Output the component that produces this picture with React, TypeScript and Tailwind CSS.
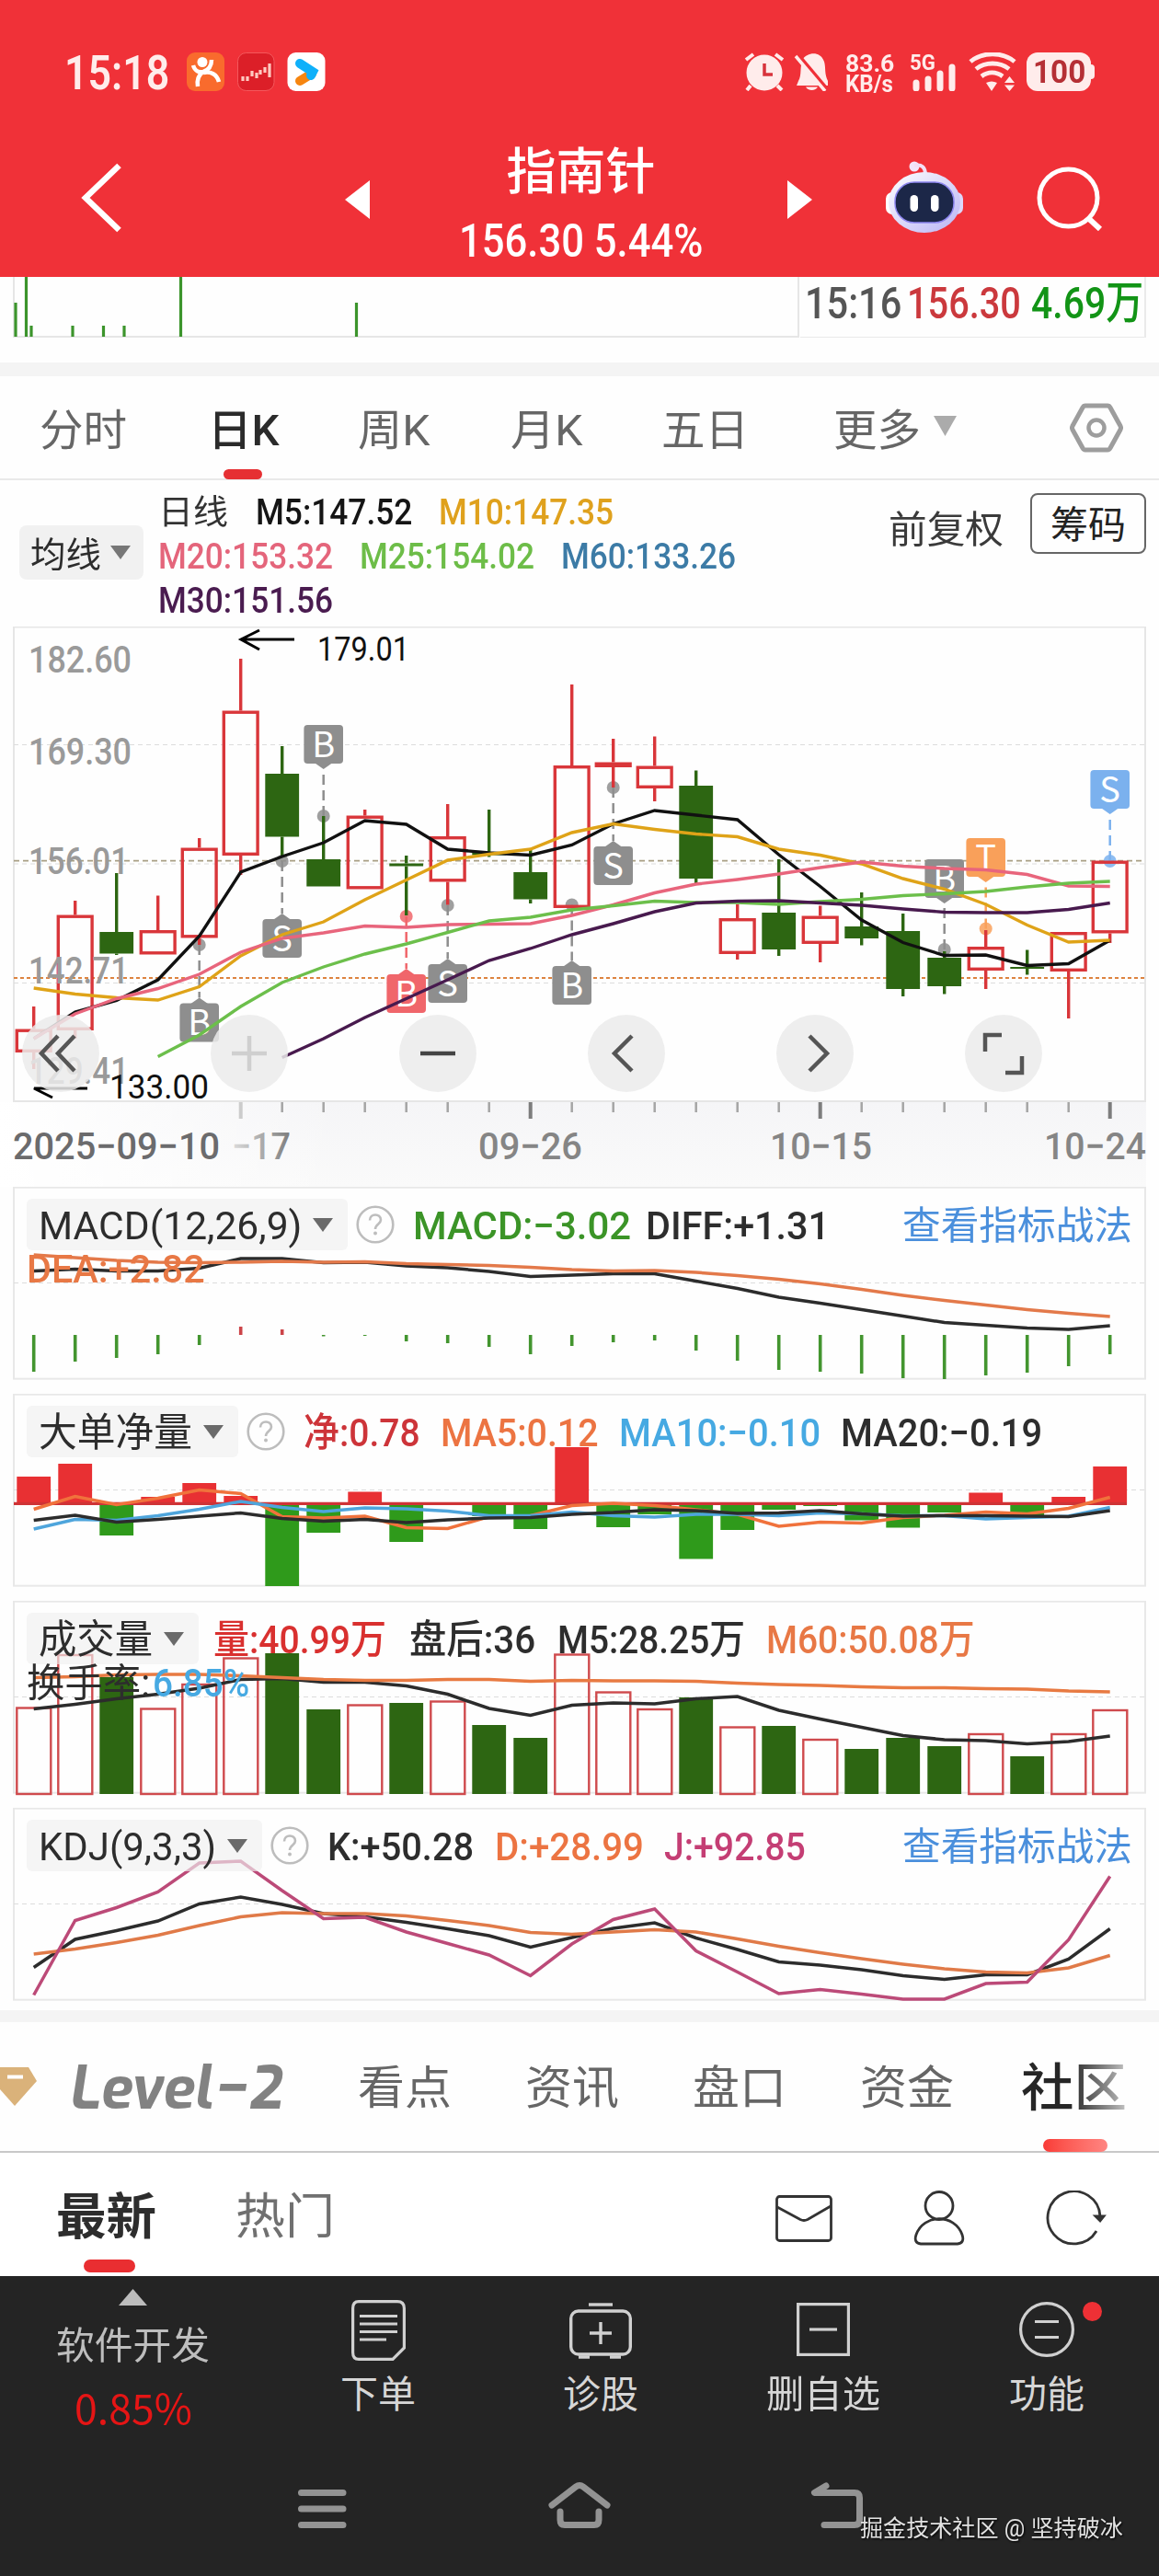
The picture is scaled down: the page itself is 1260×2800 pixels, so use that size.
import { useLayoutEffect, useRef, type ReactNode } from "react";

type FitProps = { w: number; className?: string; children: ReactNode };

// Condenses a label so that it takes exactly w pixels
function Fit({ w, className = "", children }: FitProps) {
  const ref = useRef<HTMLSpanElement>(null);

  useLayoutEffect(() => {
    const el = ref.current;
    if (el) el.style.transform = `scaleX(${w / el.offsetWidth})`;
  }, [w, children]);

  return (
    <span className={`block shrink-0 ${className}`} style={{ width: w }}>
      <span ref={ref} className="inline-block origin-left whitespace-nowrap align-top leading-none">
        {children}
      </span>
    </span>
  );
}

const STEP = 45;
const cx = (i: number) => 36.7 + STEP * i;
const toPoints = (ys: number[], from = 0) =>
  ys.map((y, i) => `${cx(i + from)},${y}`).join(" ");

const RED = "#d9363a";
const GREEN = "#2d6612";

// [up, high, top, bottom, low]
const candles: [boolean, number, number, number, number][] = [
  [true, 413, 437.5, 463, 481],
  [true, 298, 313.5, 439, 448],
  [false, 268, 332, 355.5, 357],
  [true, 292.5, 330, 356.5, 356.5],
  [true, 230, 240.5, 338.5, 346],
  [true, 35, 91.5, 249, 270],
  [false, 130, 160, 228.5, 250.5],
  [false, 206, 253, 282.5, 282.5],
  [true, 199, 205.5, 285.5, 285.5],
  [false, 249, 257.5, 260.5, 314],
  [true, 193, 228, 277.5, 302.5],
  [false, 199, 246, 248.5, 250.5],
  [false, 242.5, 267, 296.5, 301],
  [true, 63, 151, 306, 306],
  [true, 122, 147.5, 153, 175],
  [true, 119.5, 151.5, 176, 190],
  [false, 156.5, 173, 274, 279],
  [true, 302, 317, 356, 362],
  [false, 253, 311, 351, 358],
  [true, 303.5, 314.5, 345, 365],
  [false, 289, 326, 339, 346.5],
  [false, 312, 331, 394, 402],
  [false, 353, 360, 391, 399.5],
  [true, 330, 348, 374, 394],
  [false, 351.5, 370, 372, 378.5],
  [true, 332, 332, 375, 426],
  [true, 254.5, 254.5, 333.5, 344],
];

const maLines = [
  { color: "#111111", from: 0, ys: [448, 419, 406.5, 384, 336.5, 267, 250, 235, 211, 215, 242, 246, 248.5, 237.5, 214.5, 200, 205, 210, 248, 282.5, 319, 343.5, 357.5, 357, 368.5, 366.5, 341] },
  { color: "#dfa318", from: 0, ys: [393, 399.5, 403.5, 406, 391.5, 358, 335, 321, 297, 275.5, 254, 247.5, 242, 224, 214.5, 220.5, 225.5, 228.5, 242, 248.5, 258, 274, 285.5, 302, 324.5, 343, 341] },
  { color: "#e8657c", from: 0, ys: [448, 421, 404.5, 393.5, 378, 354, 339, 333, 325.5, 327, 324, 323.5, 323, 314, 302.5, 289.5, 280, 275, 269, 262, 256, 260.5, 263, 264.5, 269.5, 282, 282.5] },
  { color: "#6cbf4b", from: 3, ys: [467.5, 444, 413, 387, 370, 356, 345, 332.5, 320, 316, 308, 303.5, 298.5, 300, 300, 302, 299, 296.5, 292.5, 290.5, 288, 283, 279, 277] },
  { color: "#481a4e", from: 6, ys: [468.5, 448, 425, 404.5, 384, 363, 350, 335, 323, 310, 300.5, 298.5, 298, 300.5, 303, 307, 310.5, 311, 311, 307.5, 300.5] },
];

const GRAY = "#8e8e8e";
// box top, dot position and colour of every trade flag
const flags = [
  { i: 4, t: "B", top: 409.5, dot: 346, color: GRAY },
  { i: 6, t: "S", top: 318, dot: 255, color: GRAY },
  { i: 7, t: "B", top: 107, dot: 206, color: GRAY },
  { i: 9, t: "B", top: 378, dot: 315, color: "#f0666b" },
  { i: 10, t: "S", top: 367, dot: 303, color: GRAY },
  { i: 13, t: "B", top: 369, dot: 302.5, color: GRAY },
  { i: 14, t: "S", top: 239, dot: 175, color: GRAY },
  { i: 22, t: "B", top: 253, dot: 351, color: GRAY },
  { i: 23, t: "T", top: 230, dot: 328.5, color: "#f9a05a" },
  { i: 26, t: "S", top: 156, dot: 255, color: "#7bb1ee" },
];

function Flag({ i, t, top, dot, color }: (typeof flags)[number]) {
  const x = cx(i);
  const below = top > dot;
  const tip = below ? top - 6 : top + 48;
  const edge = below ? top + 1 : top + 41;
  return (
    <g fill={color}>
      <line x1={x} x2={x} y1={dot} y2={tip} stroke={color} strokeWidth="2.5" strokeDasharray="11 6" />
      <circle cx={x} cy={dot} r="7" opacity="0.85" />
      <path d={`M${x - 10} ${edge} L${x} ${tip} L${x + 10} ${edge}Z`} />
      <rect x={x - 21.3} y={top} width="42.6" height="42" rx="4" />
      <text x={x} y={top + 34.5} fontSize="38" fill="#fff" textAnchor="middle" fontFamily="Noto Sans CJK SC, sans-serif">
        {t}
      </text>
    </g>
  );
}

const priceLabels: [string, number, number][] = [
  ["182.60", 50, 112],
  ["169.30", 149.5, 112],
  ["156.01", 268.5, 109],
  ["142.71", 388, 109],
  ["129.41", 497, 109],
];

function KLineChart() {
  return (
    <svg className="absolute inset-0" width="1260" height="609" viewBox="0 0 1260 609" fontFamily="Roboto, sans-serif">
      <defs>
        <linearGradient id="axis" x1="0" x2="0" y1="0" y2="1">
          <stop offset="0" stopColor="#f5f5f7" />
          <stop offset="1" stopColor="#fafafa" />
        </linearGradient>
        <linearGradient id="fade" x1="0" x2="1">
          <stop offset="0" stopColor="#dcdcdc" />
          <stop offset="1" stopColor="#7d7d7d" />
        </linearGradient>
        <linearGradient id="axisX" x1="0" x2="1">
          <stop offset="0" stopColor="#fff" />
          <stop offset="0.3" stopColor="#fff" stopOpacity="0" />
        </linearGradient>
      </defs>
      <rect x="0" y="517" width="1246" height="92" fill="url(#axis)" />
      <rect x="0" y="517" width="1246" height="92" fill="url(#axisX)" />
      <rect x="15" y="0.5" width="1230" height="515.5" fill="#fefefe" stroke="#e6e6e6" strokeWidth="2" />

      <line x1="15" x2="1245" y1="128.5" y2="128.5" stroke="#dcdcdc" strokeWidth="1" strokeDasharray="5 4" />
      <line x1="15" x2="1245" y1="258" y2="258" stroke="#dcdcdc" strokeWidth="1" strokeDasharray="5 4" />
      <line x1="15" x2="1245" y1="387.5" y2="387.5" stroke="#dcdcdc" strokeWidth="1" strokeDasharray="5 4" />
      <line x1="15" x2="1245" y1="254.7" y2="254.7" stroke="#a89f84" strokeWidth="1.7" strokeDasharray="6 4" />
      <line x1="15" x2="1245" y1="382" y2="382" stroke="#dd8440" strokeWidth="2" strokeDasharray="4 3" />

      {flags.map((f) => (
        <Flag key={f.i} {...f} />
      ))}

      {candles.map(([up, high, top, bottom, low], i) => {
        const x = cx(i);
        const color = up ? RED : GREEN;
        return (
          <g key={i} stroke={color} strokeWidth="3.4">
            <line x1={x} x2={x} y1={high} y2={top} />
            <line x1={x} x2={x} y1={bottom} y2={low} />
            {up ? (
              <rect x={x - 18.4} y={top + 1.7} width="36.8" height={Math.max(bottom - top - 3.4, 1)} fill="none" />
            ) : (
              <rect x={x - 18.4} y={top} width="36.8" height={bottom - top} fill={color} stroke="none" />
            )}
          </g>
        );
      })}

      {priceLabels.map(([label, y, w]) => (
        <text key={label} x="31" y={y} fontSize="41" fill="#9a9a9a" fontWeight="500" textLength={w} lengthAdjust="spacingAndGlyphs">
          {label}
        </text>
      ))}

      {maLines.map((l) => (
        <polyline key={l.color} points={toPoints(l.ys, l.from)} fill="none" stroke={l.color} strokeWidth="3.4" />
      ))}

      {/* High and low of the range */}
      <path d="M320 14H262M282 4L262 14L282 25" fill="none" stroke="#000" strokeWidth="3" />
      <text x="345" y="36.5" fontSize="37" fill="#111" textLength="100" lengthAdjust="spacingAndGlyphs">179.01</text>
      <path d="M95 502H37L57 512" fill="none" stroke="#000" strokeWidth="3" />
      <text x="119" y="513" fontSize="37" fill="#111" textLength="108" lengthAdjust="spacingAndGlyphs">133.00</text>

      {candles.map((_, i) => {
        if (i < 5) return null;
        const long = i % 7 === 5;
        return (
          <line key={i} x1={cx(i)} x2={cx(i)} y1="517" y2={long ? 535 : 528} stroke={i === 5 ? "#ccc" : long ? "#7d7d7d" : "#a5a5a5"} strokeWidth={long ? 4 : 2.5} />
        );
      })}
      <g fontSize="41" fill="#858585" fontWeight="500">
        <text x="14" y="578.500" fill="#6b6b6d" textLength="225" lengthAdjust="spacingAndGlyphs">2025−09−10</text>
        <text x="252" y="578.500" fill="url(#fade)" textLength="64" lengthAdjust="spacingAndGlyphs">−17</text>
        <text x="520" y="578.500" textLength="113" lengthAdjust="spacingAndGlyphs">09−26</text>
        <text x="837" y="578.500" textLength="111" lengthAdjust="spacingAndGlyphs">10−15</text>
        <text x="1135" y="578.500" textLength="111" lengthAdjust="spacingAndGlyphs">10−24</text>
      </g>
    </svg>
  );
}

const controls = [
  { id: "fast", d: "M39 23L21 42L39 61M57 23L39 42L57 61", color: "#555" },
  { id: "plus", d: "M42 23V61M23 42H61", color: "#cfcfcf" },
  { id: "minus", d: "M23 42H61", color: "#444" },
  { id: "prev", d: "M48 23L29 42L48 61", color: "#555" },
  { id: "next", d: "M36 23L55 42L36 61", color: "#555" },
  { id: "full", d: "M22 40V22H40M62 45V63H44", color: "#555" },
];

const macd = {
  diff: [91.5, 89.5, 91.5, 91.5, 88.5, 78, 78, 82.5, 82, 86, 88, 92, 97.5, 96, 94.5, 94.5, 102.5, 110.5, 120, 126.5, 133.5, 140.5, 147.5, 150.5, 153.5, 155, 151],
  dea: [74, 77, 80, 82, 82.5, 82, 81, 82, 81.5, 83.5, 84.5, 85.5, 87.5, 90, 91.5, 91, 93, 96.5, 100.5, 105.5, 111.5, 118, 123.5, 128.5, 133.5, 137.5, 141],
  bars: [40, 29, 25, 21, 11, -9, -6, 1.5, 1, 7, 9, 13, 21, 12, 8, 6, 17, 28, 38, 40, 42, 47, 48, 44, 41, 34, 21],
};

const flow = {
  ends: [90, 76, 154, 112, 97, 111, 209, 151, 106.5, 161, 120, 133, 147, 58, 145, 131, 179.5, 148, 126, 122, 137.5, 145.5, 129, 107.5, 132, 112, 79],
  ma5: [125.5, 111.5, 120.5, 113.5, 104.5, 108.5, 133.5, 135, 133, 145.5, 146.5, 133.5, 132.5, 121.5, 119, 121.5, 126, 131, 144, 139.5, 140.5, 134.5, 132, 128.5, 130.5, 124.5, 112.5],
  ma10: [147, 136.5, 137.5, 132.5, 125.5, 117, 123.5, 128, 124, 125, 127.5, 132.5, 132.5, 128.5, 132.5, 134, 131, 131, 132.5, 129.5, 130.5, 132.5, 132.5, 136, 134.5, 133, 123.5],
  ma20: [137.5, 132, 139.5, 136.5, 133, 129.5, 135.5, 138.5, 136.5, 140, 137, 135, 134.5, 131, 129, 126, 127, 130, 129.5, 127, 130.5, 133, 132.5, 132.5, 133, 133.5, 127],
};

const volume = {
  tops: [115.5, 58, 83, 116.5, 90, 61.5, 57, 118, 112.5, 111, 108.5, 135, 149, 57.5, 98.5, 117, 105, 136.5, 136, 150, 161, 149, 158, 144, 169, 144, 118],
  m5: [117.5, 112.5, 106.5, 101.5, 95, 85.5, 84.5, 88.5, 88.5, 92.5, 101.5, 117, 124.5, 113.5, 111, 112, 106.5, 104, 119, 128.5, 137.5, 146.5, 151, 152, 155.5, 153, 147],
  m60: [83.5, 82.5, 80.5, 80, 80, 81.5, 83.5, 85.5, 86.5, 86.5, 85.5, 85.5, 87.5, 86.5, 87, 87, 87.5, 89.5, 91, 92, 93.5, 94.5, 94.5, 95.5, 96, 98, 99],
};

const kdj = {
  k: [173.5, 143, 133.5, 123, 104.5, 97, 105, 115, 118.5, 124.5, 131.5, 139, 151.5, 141, 131, 125, 141.5, 154, 167.5, 171, 176, 182.5, 186.5, 181.5, 181.5, 164.5, 131.5],
  d: [159, 153.5, 146.5, 138.5, 128, 118.5, 114, 115, 115, 117.5, 122.5, 128, 135.5, 137.5, 135, 132.5, 135, 142.5, 150.5, 157.5, 164, 170, 175, 178.5, 179.5, 174, 160.5],
  j: [203.5, 122.5, 108.5, 91.5, 60, 58, 90, 120.5, 119, 135, 147.5, 160, 182.5, 148, 121.5, 110, 155.5, 178.5, 202, 197.5, 202.5, 208, 208, 191, 189.5, 143.5, 74.5],
};

function Line({ ys, color }: { ys: number[]; color: string }) {
  return <polyline points={toPoints(ys)} fill="none" stroke={color} strokeWidth="3.5" />;
}

type Value = { text: string; w: number; className: string };
type PanelProps = {
  name: string;
  nameW: number;
  help?: boolean;
  values: Value[];
  second?: ReactNode;
  link?: boolean;
  children: ReactNode;
};

function Panel({ name, nameW, help, values, second, link, children }: PanelProps) {
  return (
    <section className="relative mb-4 h-[209px]">
      <svg className="absolute inset-0 z-10" width="1260" height="212" viewBox="0 0 1260 212">
        <rect x="15" y="0.7" width="1230" height="208" fill="none" stroke="#e8e8e8" strokeWidth="2" />
        <line x1="15" x2="1245" y1="104.5" y2="104.5" stroke="#dcdcdc" strokeWidth="1" strokeDasharray="5 4" />
        {children}
      </svg>
      <div className="flex h-[69px] items-center pt-[13px] pl-[29px] text-[43px]">
        <div className="relative z-20 flex h-14 shrink-0 items-center gap-3 rounded-md bg-[#f0f0f0]/65 pr-4 pl-[13px] text-[#2d2d2d]">
          <Fit w={nameW} className="pt-0.5">{name}</Fit>
          <svg width="22" height="15" viewBox="0 0 22 15">
            <path d="M0 0H22L11 15Z" fill="#6a6a6a" />
          </svg>
        </div>
        {help && (
          <svg className="ml-[9px] shrink-0" width="42" height="42" viewBox="0 0 42 42">
            <circle cx="21" cy="21" r="19.3" fill="none" stroke="#bdbdbd" strokeWidth="2.6" />
            <path d="M15 16.5C15 8.500 27 8.500 27 16C27 20.500 21 20.500 21 26" fill="none" stroke="#bdbdbd" strokeWidth="2.6" />
            <circle cx="21" cy="30.500" r="2" fill="#bdbdbd" />
          </svg>
        )}
        {values.map((v) => (
          <Fit key={v.text} w={v.w} className={`pt-0.5 font-medium ${v.className}`}>
            {v.text}
          </Fit>
        ))}
        {link && (
          <Fit w={250} className="mr-[29px] ml-auto pt-1 text-[42px] text-[#4a8fdc]">
            查看指标战法
          </Fit>
        )}
      </div>
      {second && <div className="relative z-20 flex items-center text-[42px]">{second}</div>}
    </section>
  );
}

function StatusBar() {
  return (
    <div className="flex h-[42px] items-center">
      <Fit w={114} className="ml-[70px] pt-0.5 text-[51px] font-semibold text-[#ffeceb]">15:18</Fit>
      <svg className="ml-[19px]" width="151" height="42" viewBox="203 57 151 42">
        <rect x="203" y="57" width="41" height="42" rx="9" fill="#f96b2d" />
        <circle cx="220" cy="67.500" r="5.500" fill="#fff" />
        <path d="M210 71C212 78 217 79 221 78C227 76 230 72 230 65M221 78C215 82 214 88 215 94M221 79C229 77 236 81 238 89" fill="none" stroke="#fff" strokeWidth="4.500" />
        <rect x="258.500" y="57.500" width="39.500" height="41" rx="9" fill="#dc1f28" stroke="#f4585c" />
        <path d="M264 83V88M269 83V88M274 77V83M279 79V85M283 76V81M288 73V79M293 69V84" stroke="#ffc9c0" strokeWidth="3.200" />
        <rect x="312.500" y="57" width="41" height="42" rx="9" fill="#fff" />
        <path d="M326 88L339 80" stroke="#f6850f" strokeWidth="10" strokeLinecap="round" />
        <path d="M326 69L340 78L338 82" fill="none" stroke="#0fb0fa" strokeWidth="10" strokeLinecap="round" />
      </svg>

      {/* Alarm, muted bell */}
      <svg className="ml-[455px]" width="92" height="42" viewBox="809 57 92 42">
        <circle cx="831" cy="79" r="19.500" fill="#ffeceb" />
        <path d="M811 65L819 59M851 65L843 59M816 93L812 98M845 93L850 98" stroke="#ffeceb" strokeWidth="4" />
        <path d="M831 69V81H840" fill="none" stroke="#d8333c" strokeWidth="3.500" />
        <path d="M868 88C872 82 869 72 873 64C877 58 891 54 896 67C898 74 896 80 900 88V93H866Z" fill="#ffeceb" />
        <path d="M876 94.500H889C887 99 878 99 876 94.500Z" fill="#ffeceb" />
        <path d="M869 61L901 99" stroke="#f03038" strokeWidth="4" />
        <path d="M865 61L897 99" stroke="#ffeceb" strokeWidth="3.500" />
      </svg>
      <div className="ml-[18px] flex flex-col gap-px pt-1 text-[25px] font-bold text-[#ffeceb]">
        <Fit w={53}>83.6</Fit>
        <Fit w={52} className="-mt-1">KB/s</Fit>
      </div>
      <div className="relative ml-[17px] h-[42px] w-[52px]">
        <Fit w={28} className="text-[23px] font-bold text-[#ffeceb]">5G</Fit>
        <svg className="absolute inset-0" width="52" height="42" viewBox="989 57 52 42">
          <path d="M996 90V96M1009 86V96M1022 80V96M1035 73V96" stroke="#ffeceb" strokeWidth="7" strokeLinecap="round" />
        </svg>
      </div>
      <svg className="ml-3" width="52" height="42" viewBox="1053 57 52 42">
        <path d="M1055 67C1068 56 1090 56 1103 67M1061 75C1071 67 1087 67 1097 75M1067 83C1074 77.500 1083 77.500 1090 83" fill="none" stroke="#ffeceb" strokeWidth="4.800" />
        <path d="M1072 90Q1078 87 1084 90L1078 99ZM1092 90L1097.500 83L1103 90ZM1092 92.500H1103L1097.500 99Z" fill="#ffeceb" />
      </svg>
      <div className="ml-[11px] flex h-[42px] w-[70px] items-center rounded-xl bg-[#ffeceb] pl-[7px]">
        <Fit w={57} className="text-[35px] font-bold text-[#b52f35]">100</Fit>
      </div>
      <div className="h-4 w-1 rounded-r bg-[#ffeceb]" />
    </div>
  );
}

function Header() {
  return (
    <header className="h-[301px] bg-[#f03138] pt-[57px] text-white">
      <StatusBar />
      <div className="mt-[51px] flex h-[130px] items-center">
        <svg className="ml-[88px]" width="44" height="76" viewBox="88 176 44 76">
          <path d="M129.500 179L93 214L129.500 249" fill="none" stroke="#fff" strokeWidth="6.500" />
        </svg>
        <svg className="mt-1 ml-[243px]" width="27" height="42" viewBox="0 0 27 42">
          <path d="M27 0V42L0 21Z" fill="#fff" />
        </svg>
        <div className="ml-[97px] flex h-[130px] w-[265px] flex-col items-center pt-[11px]">
          <Fit w={162} className="text-[54px] font-medium">指南针</Fit>
          <Fit w={265} className="mt-[22px] text-[50px] font-medium">156.30 5.44%</Fit>
        </div>
        <svg className="mt-1 ml-[92px]" width="27" height="42" viewBox="0 0 27 42">
          <path d="M0 0V42L27 21Z" fill="#fff" />
        </svg>
        <svg className="ml-[79px]" width="86" height="80" viewBox="962 174 86 80">
          <defs>
            <linearGradient id="robot" x1="0" x2="1" y1="0" y2="1">
              <stop offset="0" stopColor="#ffffff" />
              <stop offset="1" stopColor="#b9b4f4" />
            </linearGradient>
          </defs>
          <circle cx="994" cy="180" r="5.500" fill="#f3e6fb" />
          <path d="M994 179C1002 177 1006 181 1006 189" fill="none" stroke="#f3dff5" strokeWidth="4" />
          <rect x="963" y="208" width="14" height="24" rx="7" fill="#fff" />
          <rect x="1033" y="208" width="14" height="24" rx="7" fill="#dcd7fa" />
          <ellipse cx="1005" cy="219" rx="39" ry="33" fill="url(#robot)" />
          <rect x="973" y="197" width="64" height="44" rx="21" fill="#1c2748" stroke="#8d86ef" strokeWidth="1.500" />
          <rect x="989.500" y="211" width="8.500" height="18" rx="4.200" fill="#fff" />
          <rect x="1012" y="211" width="8.500" height="18" rx="4.200" fill="#fff" />
        </svg>
        <svg className="ml-[79px]" width="72" height="72" viewBox="1126 179 72 72">
          <ellipse cx="1160.500" cy="215" rx="31.500" ry="31" fill="none" stroke="#fff" strokeWidth="5" />
          <path d="M1182 237L1195 249" stroke="#fff" strokeWidth="6" />
        </svg>
      </div>
    </header>
  );
}

function TickStrip() {
  const bars = [[17, 28], [28.5, 0], [34, 53], [79, 53], [112.5, 53], [135, 53], [196.5, 0], [387.5, 28]];
  return (
    <div className="flex h-[93px] items-start">
      <svg width="870" height="66" viewBox="0 0 870 66">
        <path d="M15 0V65H868V0" fill="none" stroke="#e6e6e6" strokeWidth="2" />
        {bars.map(([x, y]) => (
          <line key={x} x1={x} x2={x} y1={y} y2="65" stroke="#3c942c" strokeWidth="3.200" />
        ))}
      </svg>
      <div className="flex h-[66px] w-[376px] border-r-2 border-b border-[#eaeaea] pt-1 pl-[5px] text-[49px]">
        <Fit w={105} className="font-medium text-[#555]">15:16</Fit>
        <Fit w={124} className="ml-[6px] font-medium text-[#cb393d]">156.30</Fit>
        <Fit w={122} className="ml-[11px] font-medium text-[#129416]">4.69万</Fit>
      </div>
    </div>
  );
}

function PeriodTabs() {
  return (
    <nav className="relative flex h-[113px] items-center border-b-2 border-[#e9e9e9] pt-[5px] text-[47px] text-[#666]">
      <Fit w={95} className="ml-[43px]">分时</Fit>
      <Fit w={78} className="ml-[88px] font-medium text-[#2b2b2b]">日K</Fit>
      <Fit w={79} className="ml-[85px]">周K</Fit>
      <Fit w={79} className="ml-[87px]">月K</Fit>
      <Fit w={95} className="ml-[85px]">五日</Fit>
      <Fit w={95} className="ml-[92px]">更多</Fit>
      <svg className="-mt-2 ml-[14px]" width="25" height="22" viewBox="0 0 25 22">
        <path d="M0 0H25L12.500 22Z" fill="#ababab" />
      </svg>
      <svg className="-mt-1 ml-[123px]" width="58" height="54" viewBox="0 0 58 54">
        <path d="M17 3H41Q43 3 44 5L55 25Q56 27 55 29L44 49Q43 51 41 51H17Q15 51 14 49L3 29Q2 27 3 25L14 5Q15 3 17 3Z" fill="none" stroke="#9d9d9d" strokeWidth="5" />
        <circle cx="29" cy="27" r="8.500" fill="none" stroke="#9d9d9d" strokeWidth="4.500" />
      </svg>
      <div className="absolute -bottom-px left-[243px] h-[11px] w-[42px] rounded-full bg-[#e63033]" />
    </nav>
  );
}

function MaSummary() {
  return (
    <div className="flex h-[159px] items-start text-[38px]">
      <div className="mt-[49px] ml-[21px] flex h-[59px] w-[135px] items-center rounded-lg bg-[#f1f1f1] pl-3 text-[#2d2d2d]">
        <Fit w={77} className="pt-1">均线</Fit>
        <svg className="ml-2.5" width="22" height="15" viewBox="0 0 22 15">
          <path d="M0 0H22L11 15Z" fill="#777" />
        </svg>
      </div>
      <div className="ml-4 flex w-[640px] flex-col pt-4 font-medium">
        <div className="flex h-12">
          <Fit w={76} className="pt-px text-[37px] font-normal text-[#333]">日线</Fit>
          <Fit w={170} className="ml-[30px] text-[#151515]">M5:147.52</Fit>
          <Fit w={190} className="ml-[29px] text-[#dfa11d]">M10:147.35</Fit>
        </div>
        <div className="flex h-12">
          <Fit w={190} className="text-[#e4657b]">M20:153.32</Fit>
          <Fit w={190} className="ml-[29px] text-[#6dbd48]">M25:154.02</Fit>
          <Fit w={190} className="ml-[29px] text-[#3c7ba6]">M60:133.26</Fit>
        </div>
        <Fit w={190} className="text-[#4a1c50]">M30:151.56</Fit>
      </div>
      <Fit w={125} className="mt-[34px] ml-[154px] text-[41px] text-[#3a3a3a]">前复权</Fit>
      <div className="mt-[14px] ml-[29px] flex h-[66px] w-[126px] items-center justify-center rounded-lg border-2 border-[#666] pt-1 text-[41px] text-[#222]">
        <Fit w={82}>筹码</Fit>
      </div>
    </div>
  );
}

function SectionTabs() {
  return (
    <nav className="relative flex h-[142px] items-center border-b-2 border-[#c8c8c8] pt-1 text-[50px] text-[#666]">
      <svg className="-mt-1" width="40" height="42" viewBox="0 0 40 42">
        <path d="M-8 0H31L40 15L16 42L-8 15Z" fill="#dab27a" />
        <path d="M8 10.500H25" stroke="#fff" strokeWidth="4" />
      </svg>
      <Fit w={232} className="ml-[34px] text-[65px] font-bold text-[#828282] italic">
        <span className="font-[Exo,Inter,sans-serif]">Level−2</span>
      </Fit>
      <Fit w={102} className="ml-[83px]">看点</Fit>
      <Fit w={102} className="ml-[80px]">资讯</Fit>
      <Fit w={102} className="ml-[80px]">盘口</Fit>
      <Fit w={102} className="ml-[80px]">资金</Fit>
      <Fit w={115} className="ml-[73px] text-[56px] font-medium">
        <span className="bg-linear-to-r from-[#262626] from-45% to-[#c4c4c4] bg-clip-text text-transparent">社区</span>
      </Fit>
      <div className="absolute -bottom-px left-[1134px] h-[14px] w-[70px] rounded-full bg-linear-to-r from-[#f93a36] to-[#ff8582]" />
    </nav>
  );
}

function PostFilters() {
  return (
    <div className="relative flex h-[134px] items-center bg-white pt-[7px]">
      <Fit w={109} className="ml-[61px] text-[54px] font-bold text-[#2d2d2d]">最新</Fit>
      <Fit w={108} className="ml-[86px] text-[53px] text-[#707070]">热门</Fit>
      <svg className="ml-[479px]" width="360" height="60" viewBox="843 2380 360 60" fill="none" stroke="#333" strokeWidth="2.800">
        <rect x="844.500" y="2386.500" width="59" height="48" rx="3" />
        <path d="M845 2398L870 2411.500Q874 2413.500 878 2411.500L903 2397" />
        <circle cx="1021" cy="2396.500" r="15" />
        <path d="M1001 2438Q993 2437 996 2428C1004 2405 1038 2405 1046 2428Q1049 2437 1041 2438Z" />
        <path d="M1196 2408A28.500 28.500 0 1 0 1192 2424" />
        <path d="M1191 2408H1200L1196 2413Z" fill="#333" />
      </svg>
      <div className="absolute bottom-[4px] left-[91px] h-[14px] w-[56px] rounded-full bg-[#e92e31]" />
    </div>
  );
}

function ActionBar() {
  return (
    <footer className="relative h-[326px] bg-[#242424] text-[41px] text-[#d6d6d6]">
      <div className="flex h-[170px] items-start">
        <div className="ml-[61px] flex w-[167px] flex-col items-center pt-[14px]">
          <svg width="31" height="18" viewBox="0 0 31 18">
            <path d="M0 18L15.500 0L31 18Z" fill="#bcbcbc" />
          </svg>
          <Fit w={167} className="mt-[24px] text-[#bebebe]">软件开发</Fit>
          <Fit w={128} className="mt-[22px] font-['Noto_Sans_CJK_SC'] text-[45px] text-[#e51515]">0.85%</Fit>
        </div>
        <div className="ml-[142px] flex w-[82px] flex-col items-center pt-[26px]">
          <svg width="59" height="66" viewBox="0 0 59 66" fill="none" stroke="#d0d0d0" strokeWidth="3.200">
            <path d="M8 1.600H50Q57.400 1.600 57.400 9V52L45 64.400H8Q1.600 64.400 1.600 57V9Q1.600 1.600 8 1.600Z" />
            <path d="M9 17.500H50M9 26H50M9 34.500H50M9 43H38" />
          </svg>
          <Fit w={82} className="mt-[17px]">下单</Fit>
        </div>
        <div className="ml-[160px] flex w-[82px] flex-col items-center pt-[29px]">
          <svg width="68" height="63" viewBox="0 0 68 63" fill="none" stroke="#d0d0d0" strokeWidth="3.400">
            <path d="M21 2H47" />
            <rect x="1.700" y="9" width="64.600" height="47" rx="8" />
            <path d="M34 21V45M22 33H46M10 59H22M44 59H56" />
          </svg>
          <Fit w={82} className="mt-[17px]">诊股</Fit>
        </div>
        <div className="ml-[139px] flex w-[124px] flex-col items-center pt-[29px]">
          <svg width="58" height="58" viewBox="0 0 58 58" fill="none" stroke="#d0d0d0" strokeWidth="3.200">
            <rect x="1.600" y="1.600" width="54.800" height="54.800" />
            <path d="M14 29H44" />
          </svg>
          <Fit w={124} className="mt-[22px]">删自选</Fit>
        </div>
        <div className="relative ml-[140px] flex w-[82px] flex-col items-center pt-[28px]">
          <svg width="60" height="60" viewBox="0 0 60 60" fill="none" stroke="#d0d0d0" strokeWidth="3.200">
            <circle cx="30" cy="30" r="28.400" />
            <path d="M17 21.500H43M17 38.500H43" />
          </svg>
          <Fit w={82} className="mt-[21px]">功能</Fit>
          <div className="absolute top-[28px] left-[80px] size-[21px] rounded-full bg-[#ee3035]" />
        </div>
      </div>

      {/* System navigation */}
      <svg className="mt-[50px] ml-[320px]" width="625" height="60" viewBox="320 2694 625 60" fill="none" stroke="#939393" strokeWidth="7" strokeLinecap="round" strokeLinejoin="round">
        <path d="M327.500 2709.500H373M327.500 2727H373M327.500 2744.500H373" />
        <path d="M600 2723L626 2703Q630 2700 634 2703L660 2723M609 2730V2739Q609 2744.500 614 2744.500H646Q651 2744.500 651 2739V2730" />
        <path d="M898 2702L885.500 2709.500H929Q934.500 2709.500 934.500 2715V2739Q934.500 2744.500 929 2744.500H896" />
      </svg>
      <Fit w={286} className="absolute top-[262px] left-[935px] text-[25px] text-[#e2e2e2] drop-shadow-[1px_1px_1px_#000]">
        掘金技术社区 @ 坚持破冰
      </Fit>
    </footer>
  );
}

export default function App() {
  return (
    <main className="h-[2800px] w-[1260px] overflow-hidden bg-[#fefefe] font-[Roboto,'Noto_Sans_CJK_SC',sans-serif] leading-none">
      <Header />
      <TickStrip />
      <div className="h-[15px] bg-[#f4f4f4]" />
      <PeriodTabs />
      <MaSummary />

      <section className="relative h-[609px]">
        <KLineChart />
        <div className="absolute top-[422px] left-[24px] flex gap-[121px]">
          {controls.map((c) => (
            <button key={c.id} className="size-[84px] rounded-full bg-[#ebebeb]/85">
              <svg width="84" height="84" viewBox="0 0 84 84">
                <path d={c.d} fill="none" stroke={c.color} strokeWidth="4.5" />
              </svg>
            </button>
          ))}
        </div>
      </section>

      <Panel
        name="MACD(12,26,9)"
        nameW={286}
        help
        link
        values={[
          { text: "MACD:−3.02", w: 237, className: "ml-[20px] text-[#3b9427]" },
          { text: "DIFF:+1.31", w: 200, className: "ml-[16px] text-[#2d2d2d]" },
        ]}
        second={<Fit w={194} className="ml-[29px] font-medium text-[#e87845]">DEA:+2.82</Fit>}
      >
        {macd.bars.map((b, i) => (
          <line key={i} x1={cx(i)} x2={cx(i)} y1="161" y2={161 + b} stroke={b < 0 ? "#cc4448" : "#43952f"} strokeWidth="3.600" />
        ))}
        <Line ys={macd.diff} color="#2c2c2c" />
        <Line ys={macd.dea} color="#e3794a" />
      </Panel>

      <Panel
        name="大单净量"
        nameW={167}
        help
        values={[
          { text: "净:0.78", w: 127, className: "ml-[20px] text-[#cd3439]" },
          { text: "MA5:0.12", w: 172, className: "ml-[22px] text-[#ec7442]" },
          { text: "MA10:−0.10", w: 219, className: "ml-[22px] text-[#46a9e2]" },
          { text: "MA20:−0.19", w: 219, className: "ml-[22px] text-[#2d2d2d]" },
        ]}
      >
        {flow.ends.map((y, i) => (
          <rect
            key={i}
            x={cx(i) - 18.4}
            y={Math.min(y, 120.5)}
            width="36.800"
            height={Math.abs(y - 120.5)}
            fill={y < 120.5 ? "#e83033" : "#2f9a1b"}
          />
        ))}
        <line x1="15" x2="1225" y1="119.300" y2="119.300" stroke="#cf3336" strokeWidth="3.200" />
        <Line ys={flow.ma5} color="#f0723c" />
        <Line ys={flow.ma10} color="#4ea5dc" />
        <Line ys={flow.ma20} color="#2c2c2c" />
      </Panel>

      <Panel
        name="成交量"
        nameW={124}
        values={[
          { text: "量:40.99万", w: 188, className: "ml-[16px] text-[#d9302f]" },
          { text: "盘后:36", w: 137, className: "ml-[25px] text-[#2d2d2d]" },
          { text: "M5:28.25万", w: 204, className: "ml-[24px] text-[#2d2d2d]" },
          { text: "M60:50.08万", w: 227, className: "ml-[23px] text-[#e87845]" },
        ]}
        second={
          <>
            <Fit w={134} className="ml-[29px] text-[#2d2d2d]">换手率:</Fit>
            <Fit w={105} className="ml-[3px] font-medium text-[#46a9e2]">6.85%</Fit>
          </>
        }
      >
        {volume.tops.map((y, i) =>
          candles[i][0] ? (
            <rect key={i} x={cx(i) - 18.4} y={y + 1} width="37" height={209 - y} fill="none" stroke="#cf4a4d" strokeWidth="2.400" />
          ) : (
            <rect key={i} x={cx(i) - 18.4} y={y} width="36.800" height={210 - y} fill={GREEN} />
          )
        )}
        <Line ys={volume.m5} color="#2c2c2c" />
        <Line ys={volume.m60} color="#e87a42" />
      </Panel>

      <Panel
        name="KDJ(9,3,3)"
        nameW={193}
        help
        link
        values={[
          { text: "K:+50.28", w: 159, className: "ml-[20px] text-[#2d2d2d]" },
          { text: "D:+28.99", w: 162, className: "ml-[23px] text-[#ec7442]" },
          { text: "J:+92.85", w: 154, className: "ml-[22px] text-[#c43e74]" },
        ]}
      >
        <Line ys={kdj.k} color="#2c2c2c" />
        <Line ys={kdj.d} color="#e07a48" />
        <Line ys={kdj.j} color="#bc4a78" />
      </Panel>

      <div className="-mt-[5px] h-[13px] bg-[#f4f4f4]" />
      <SectionTabs />
      <PostFilters />
      <ActionBar />
    </main>
  );
}
